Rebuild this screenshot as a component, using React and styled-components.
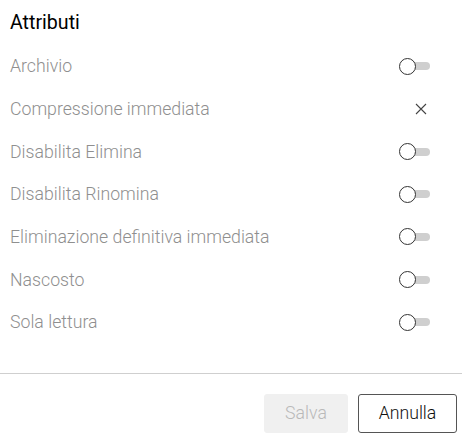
import styled, { createGlobalStyle } from 'styled-components'

const GlobalStyle = createGlobalStyle`
    body {
        margin: 0;
        background: #fff;
        font-family: Roboto, "Liberation Sans", sans-serif;
    }
`

const Pannello = styled.div`
    width: 462px;
    height: 440px;
    display: flex;
    flex-direction: column;
    background: #fff;
`

const Titolo = styled.h2`
    margin: 0;
    padding: 0 10px;
    height: 45px;
    display: flex;
    align-items: center;
    font-size: 19.6px;
    font-weight: 400;
    color: #000;
`

const Lista = styled.div`
    display: flex;
    flex-direction: column;
`

const Riga = styled.div`
    height: 42.67px;
    display: flex;
    align-items: center;
    justify-content: space-between;
    padding: 0 32px 0 10px;
    font-size: 17.7px;
    font-weight: 300;
    color: #8f8f8f;
`

const Interruttore = styled.span`
    position: relative;
    width: 31px;
    height: 17px;
    display: inline-block;

    &::before {
        content: '';
        position: absolute;
        left: 6px;
        top: 4.5px;
        width: 25px;
        height: 8px;
        border-radius: 4px;
        background: #cfcfcf;
    }

    &::after {
        content: '';
        position: absolute;
        left: 0;
        top: 0;
        width: 15px;
        height: 15px;
        border-radius: 50%;
        border: 1px solid #333;
        background: #fff;
    }
`

const Croce = styled.svg`
    width: 12px;
    height: 12px;
    margin-right: 3px;
`

const Divisore = styled.hr`
    margin: 29px 0 0;
    border: 0;
    border-top: 1px solid #cfcfcf;
`

const Piede = styled.div`
    display: flex;
    justify-content: flex-end;
    gap: 10px;
    padding: 20px 5px 0 0;
`

const Bottone = styled.button`
    height: 39px;
    padding: 0;
    width: ${p => p.$w}px;
    border-radius: 3px;
    font-family: Roboto, "Liberation Sans", sans-serif;
    font-size: 17.7px;
    font-weight: 300;
    background: ${p => (p.disabled ? '#f0f0f0' : '#fff')};
    color: ${p => (p.disabled ? '#b9b9b9' : '#111')};
    border: 1px solid ${p => (p.disabled ? '#f0f0f0' : '#555')};
`

const attributi = [
    { label: 'Archivio', tipo: 'toggle' },
    { label: 'Compressione immediata', tipo: 'x' },
    { label: 'Disabilita Elimina', tipo: 'toggle' },
    { label: 'Disabilita Rinomina', tipo: 'toggle' },
    { label: 'Eliminazione definitiva immediata', tipo: 'toggle' },
    { label: 'Nascosto', tipo: 'toggle' },
    { label: 'Sola lettura', tipo: 'toggle' },
]

const App = () => {
    return (
        <>
            <GlobalStyle />
            <Pannello>
                <Titolo>Attributi</Titolo>
                <Lista>
                    {attributi.map(a => (
                        <Riga key={a.label}>
                            <span>{a.label}</span>
                            {a.tipo === 'toggle' ? (
                                <Interruttore />
                            ) : (
                                <Croce viewBox="0 0 12 12">
                                    <path d="M1 1L11 11M11 1L1 11" stroke="#444" strokeWidth="1.1" fill="none" />
                                </Croce>
                            )}
                        </Riga>
                    ))}
                </Lista>
                <Divisore />
                <Piede>
                    <Bottone $w={84} disabled>Salva</Bottone>
                    <Bottone $w={99}>Annulla</Bottone>
                </Piede>
            </Pannello>
        </>
    )
}

export default App
